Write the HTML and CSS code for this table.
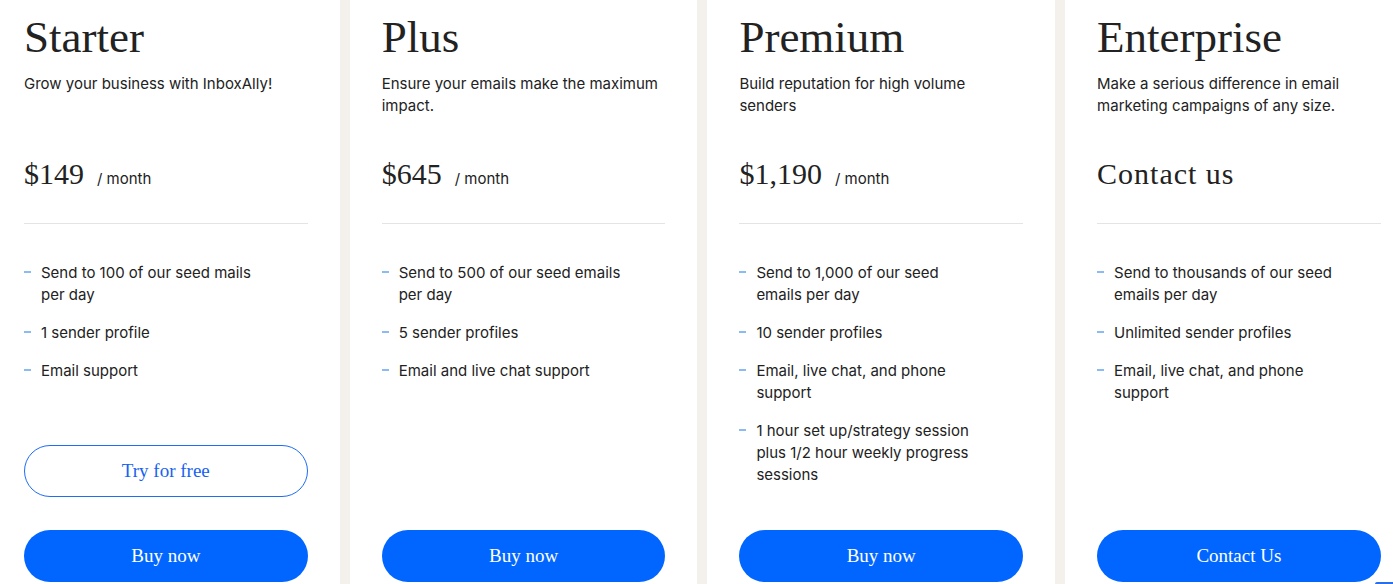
FILE: index.html
```html
<!DOCTYPE html>
<html lang="en">
<head>
    <meta charset="UTF-8">
    <meta name="viewport" content="width=device-width, initial-scale=1.0">
    <title>InboxAlly Pricing</title>
    <link rel="stylesheet" href="styles.css">
</head>
<body>
<div class="plans">
    <div class="plan">
        <h2 class="plan-name">Starter</h2>
        <p class="plan-desc">Grow your business with InboxAlly!</p>
        <div class="plan-price"><span class="amount">$149</span><span class="period">/ month</span></div>
        <ul class="features">
            <li>Send to 100 of our seed mails per day</li>
            <li>1 sender profile</li>
            <li>Email support</li>
        </ul>
        <div class="actions">
            <a href="#" class="btn btn-outline">Try for free</a>
            <a href="#" class="btn btn-solid">Buy now</a>
        </div>
    </div>
    <div class="plan">
        <h2 class="plan-name">Plus</h2>
        <p class="plan-desc">Ensure your emails make the maximum impact.</p>
        <div class="plan-price"><span class="amount">$645</span><span class="period">/ month</span></div>
        <ul class="features">
            <li>Send to 500 of our seed emails per day</li>
            <li>5 sender profiles</li>
            <li>Email and live chat support</li>
        </ul>
        <div class="actions">
            <a href="#" class="btn btn-solid">Buy now</a>
        </div>
    </div>
    <div class="plan">
        <h2 class="plan-name">Premium</h2>
        <p class="plan-desc">Build reputation for high volume senders</p>
        <div class="plan-price"><span class="amount">$1,190</span><span class="period">/ month</span></div>
        <ul class="features">
            <li>Send to 1,000 of our seed emails per day</li>
            <li>10 sender profiles</li>
            <li>Email, live chat, and phone support</li>
            <li>1 hour set up/strategy session plus 1/2 hour weekly progress sessions</li>
        </ul>
        <div class="actions">
            <a href="#" class="btn btn-solid">Buy now</a>
        </div>
    </div>
    <div class="plan">
        <h2 class="plan-name">Enterprise</h2>
        <p class="plan-desc">Make a serious difference in email marketing campaigns of any size.</p>
        <div class="plan-price"><span class="amount amount-text">Contact us</span></div>
        <ul class="features">
            <li>Send to thousands of our seed emails per day</li>
            <li>Unlimited sender profiles</li>
            <li>Email, live chat, and phone support</li>
        </ul>
        <div class="actions">
            <a href="#" class="btn btn-solid">Contact Us</a>
        </div>
    </div>
</div>
<div class="chat-tab"></div>
</body>
</html>
```
FILE: styles.css
```css
body {
    margin: 0;
    padding: 0;
    background: #f4f1ec;
    font-family: Inter, "Noto Sans", sans-serif;
    color: #222;
    overflow: hidden;
}

.plans {
    display: flex;
    gap: 10px;
    margin-left: -8px;
    height: 584px;
}

.plan {
    flex: 0 0 347.7px;
    box-sizing: border-box;
    background: #fff;
    padding: 11px 32px 2px 32px;
    display: flex;
    flex-direction: column;
}

.plan-name {
    margin: 0;
    font-family: "Liberation Serif", serif;
    font-weight: normal;
    font-size: 45px;
    line-height: 52px;
    color: #222;
}

.plan-desc {
    margin: 10px 0 0 0;
    font-size: 15px;
    line-height: 22px;
    min-height: 44px;
}

.plan-price {
    margin-top: 38px;
    height: 38px;
    display: flex;
    align-items: baseline;
    padding-bottom: 30px;
    border-bottom: 1px solid #e4e4e4;
}

.amount {
    font-family: "Liberation Serif", serif;
    font-size: 30px;
    line-height: 38px;
}

.amount-text {
    letter-spacing: 1px;
}

.period {
    font-size: 15px;
    margin-left: 13px;
}

.features {
    list-style: none;
    margin: 38px 0 0 0;
    padding: 0;
}

.features li {
    position: relative;
    padding-left: 17px;
    font-size: 15px;
    line-height: 22px;
    margin-bottom: 16px;
    max-width: 226px;
}

.features li::before {
    content: "";
    position: absolute;
    left: 0;
    top: 9px;
    width: 7px;
    height: 2px;
    background: #8cbbf3;
}

.actions {
    margin-top: auto;
    display: flex;
    flex-direction: column;
    gap: 33px;
}

.btn {
    display: flex;
    align-items: center;
    justify-content: center;
    box-sizing: border-box;
    height: 52px;
    border-radius: 26px;
    font-family: "Liberation Serif", serif;
    font-size: 19px;
    text-decoration: none;
}

.btn-outline {
    border: 1px solid #1f6cf5;
    color: #1662f0;
    background: #fff;
}

.btn-solid {
    background: #0066ff;
    color: #fff;
}

.chat-tab {
    position: fixed;
    right: 0;
    bottom: 0;
    width: 18px;
    height: 2px;
    background: #2a6ee8;
    border-radius: 2px 0 0 0;
}
```
